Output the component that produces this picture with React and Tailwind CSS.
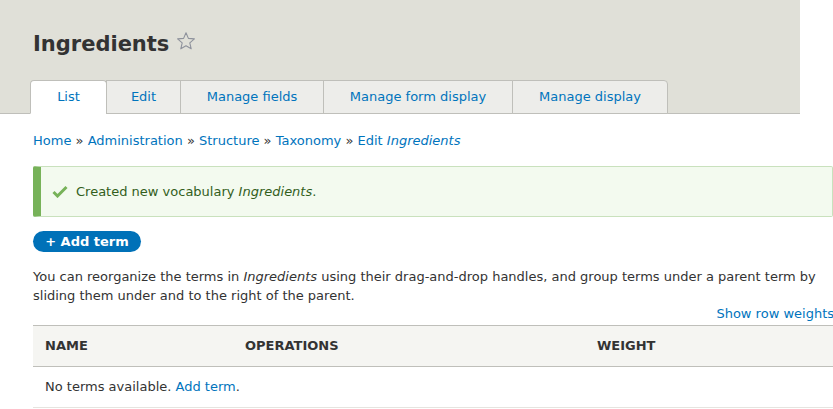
import React from "react";

const tabs = [
    { label: "List", w: "w-[77px]" },
    { label: "Edit", w: "w-[75px]" },
    { label: "Manage fields", w: "w-[144px]" },
    { label: "Manage form display", w: "w-[190px]" },
    { label: "Manage display", w: "w-[156px]" },
];

const Star = () => (
    <svg width="20" height="20" viewBox="0 0 20 20" className="ml-[7px] mt-[1px]">
        <path
            d="M10 1.8l2.4 5.6 6 .5-4.6 4 1.4 5.9L10 14.7l-5.2 3.1 1.4-5.9-4.6-4 6-.5z"
            fill="none"
            stroke="#8e929c"
            strokeWidth="1.1"
            strokeLinejoin="round"
        />
    </svg>
);

const Check = () => (
    <svg width="16" height="13" viewBox="0 0 16 13">
        <path d="M1.5 7l4 4 9-9" fill="none" stroke="#77b259" strokeWidth="3" />
    </svg>
);

const App = () => {
    return (
        <div className="w-[833px] min-h-[409px] bg-white text-[13px] text-[#333]" style={{ fontFamily: '"DejaVu Sans", Verdana, sans-serif' }}>
            {/* header */}
            <div className="w-[800px] h-[114px] bg-[#e0e0d8] border-b border-[#bfbfba] flex flex-col">
                <div className="flex items-start pl-[33px] pt-[30px] h-[80px]">
                    <h1 className="text-[21px] font-bold leading-[28px] text-[#333]">Ingredients</h1>
                    <Star />
                </div>
                <div className="flex pl-[30px] h-[34px] -mb-px">
                    {tabs.map((tab, i) => (
                        <div
                            key={tab.label}
                            className={`${tab.w} h-[34px] flex items-center justify-center border border-[#bfbfba] text-[#0074bd] ${
                                i === 0 ? "bg-white border-b-white rounded-t-[4px]" : "bg-[#ededea] -ml-px"
                            } ${i === tabs.length - 1 ? "rounded-tr-[4px]" : ""}`}
                        >
                            {tab.label}
                        </div>
                    ))}
                </div>
            </div>

            {/* content */}
            <div className="ml-[33px] w-[800px]">
                <div className="mt-[18px] text-[#0074bd] leading-[18px]">
                    Home <span className="text-[#333]">»</span> Administration <span className="text-[#333]">»</span> Structure{" "}
                    <span className="text-[#333]">»</span> Taxonomy <span className="text-[#333]">»</span> Edit <em>Ingredients</em>
                </div>

                <div className="mt-[16px] h-[51px] flex items-center bg-[#f3faef] border border-[#c9e1bd] border-l-[8px] border-l-[#77b259] rounded-[2px] text-[#325e1c]">
                    <div className="ml-[11px] mr-[8px] flex items-center">
                        <Check />
                    </div>
                    <span>
                        Created new vocabulary <em>Ingredients</em>.
                    </span>
                </div>

                <button className="mt-[14px] h-[21px] w-[108px] rounded-full bg-[#0071b8] text-white font-bold text-[13px] leading-[21px] flex items-center justify-center">
                    + Add term
                </button>

                <p className="mt-[15px] leading-[19px]">
                    You can reorganize the terms in <em>Ingredients</em> using their drag-and-drop handles, and group terms under a parent term by
                    sliding them under and to the right of the parent.
                </p>

                <div className="text-right text-[#0074bd] leading-[18px] -mr-px">Show row weights</div>

                <table className="mt-[2px] w-full border-collapse">
                    <thead>
                        <tr className="bg-[#f5f5f2] border-t border-b border-[#bfbfba] h-[41px]">
                            <th className="text-left pl-[12px] w-[212px] text-[13px] font-bold uppercase text-[#333]">Name</th>
                            <th className="text-left text-[13px] font-bold uppercase text-[#333] w-[352px]">Operations</th>
                            <th className="text-left text-[13px] font-bold uppercase text-[#333]">Weight</th>
                        </tr>
                    </thead>
                    <tbody>
                        <tr className="border-b border-[#e6e4df] h-[41px]">
                            <td colSpan={3} className="pl-[12px]">
                                No terms available. <span className="text-[#0074bd]">Add term</span>.
                            </td>
                        </tr>
                    </tbody>
                </table>
            </div>
        </div>
    );
};

export default App;
